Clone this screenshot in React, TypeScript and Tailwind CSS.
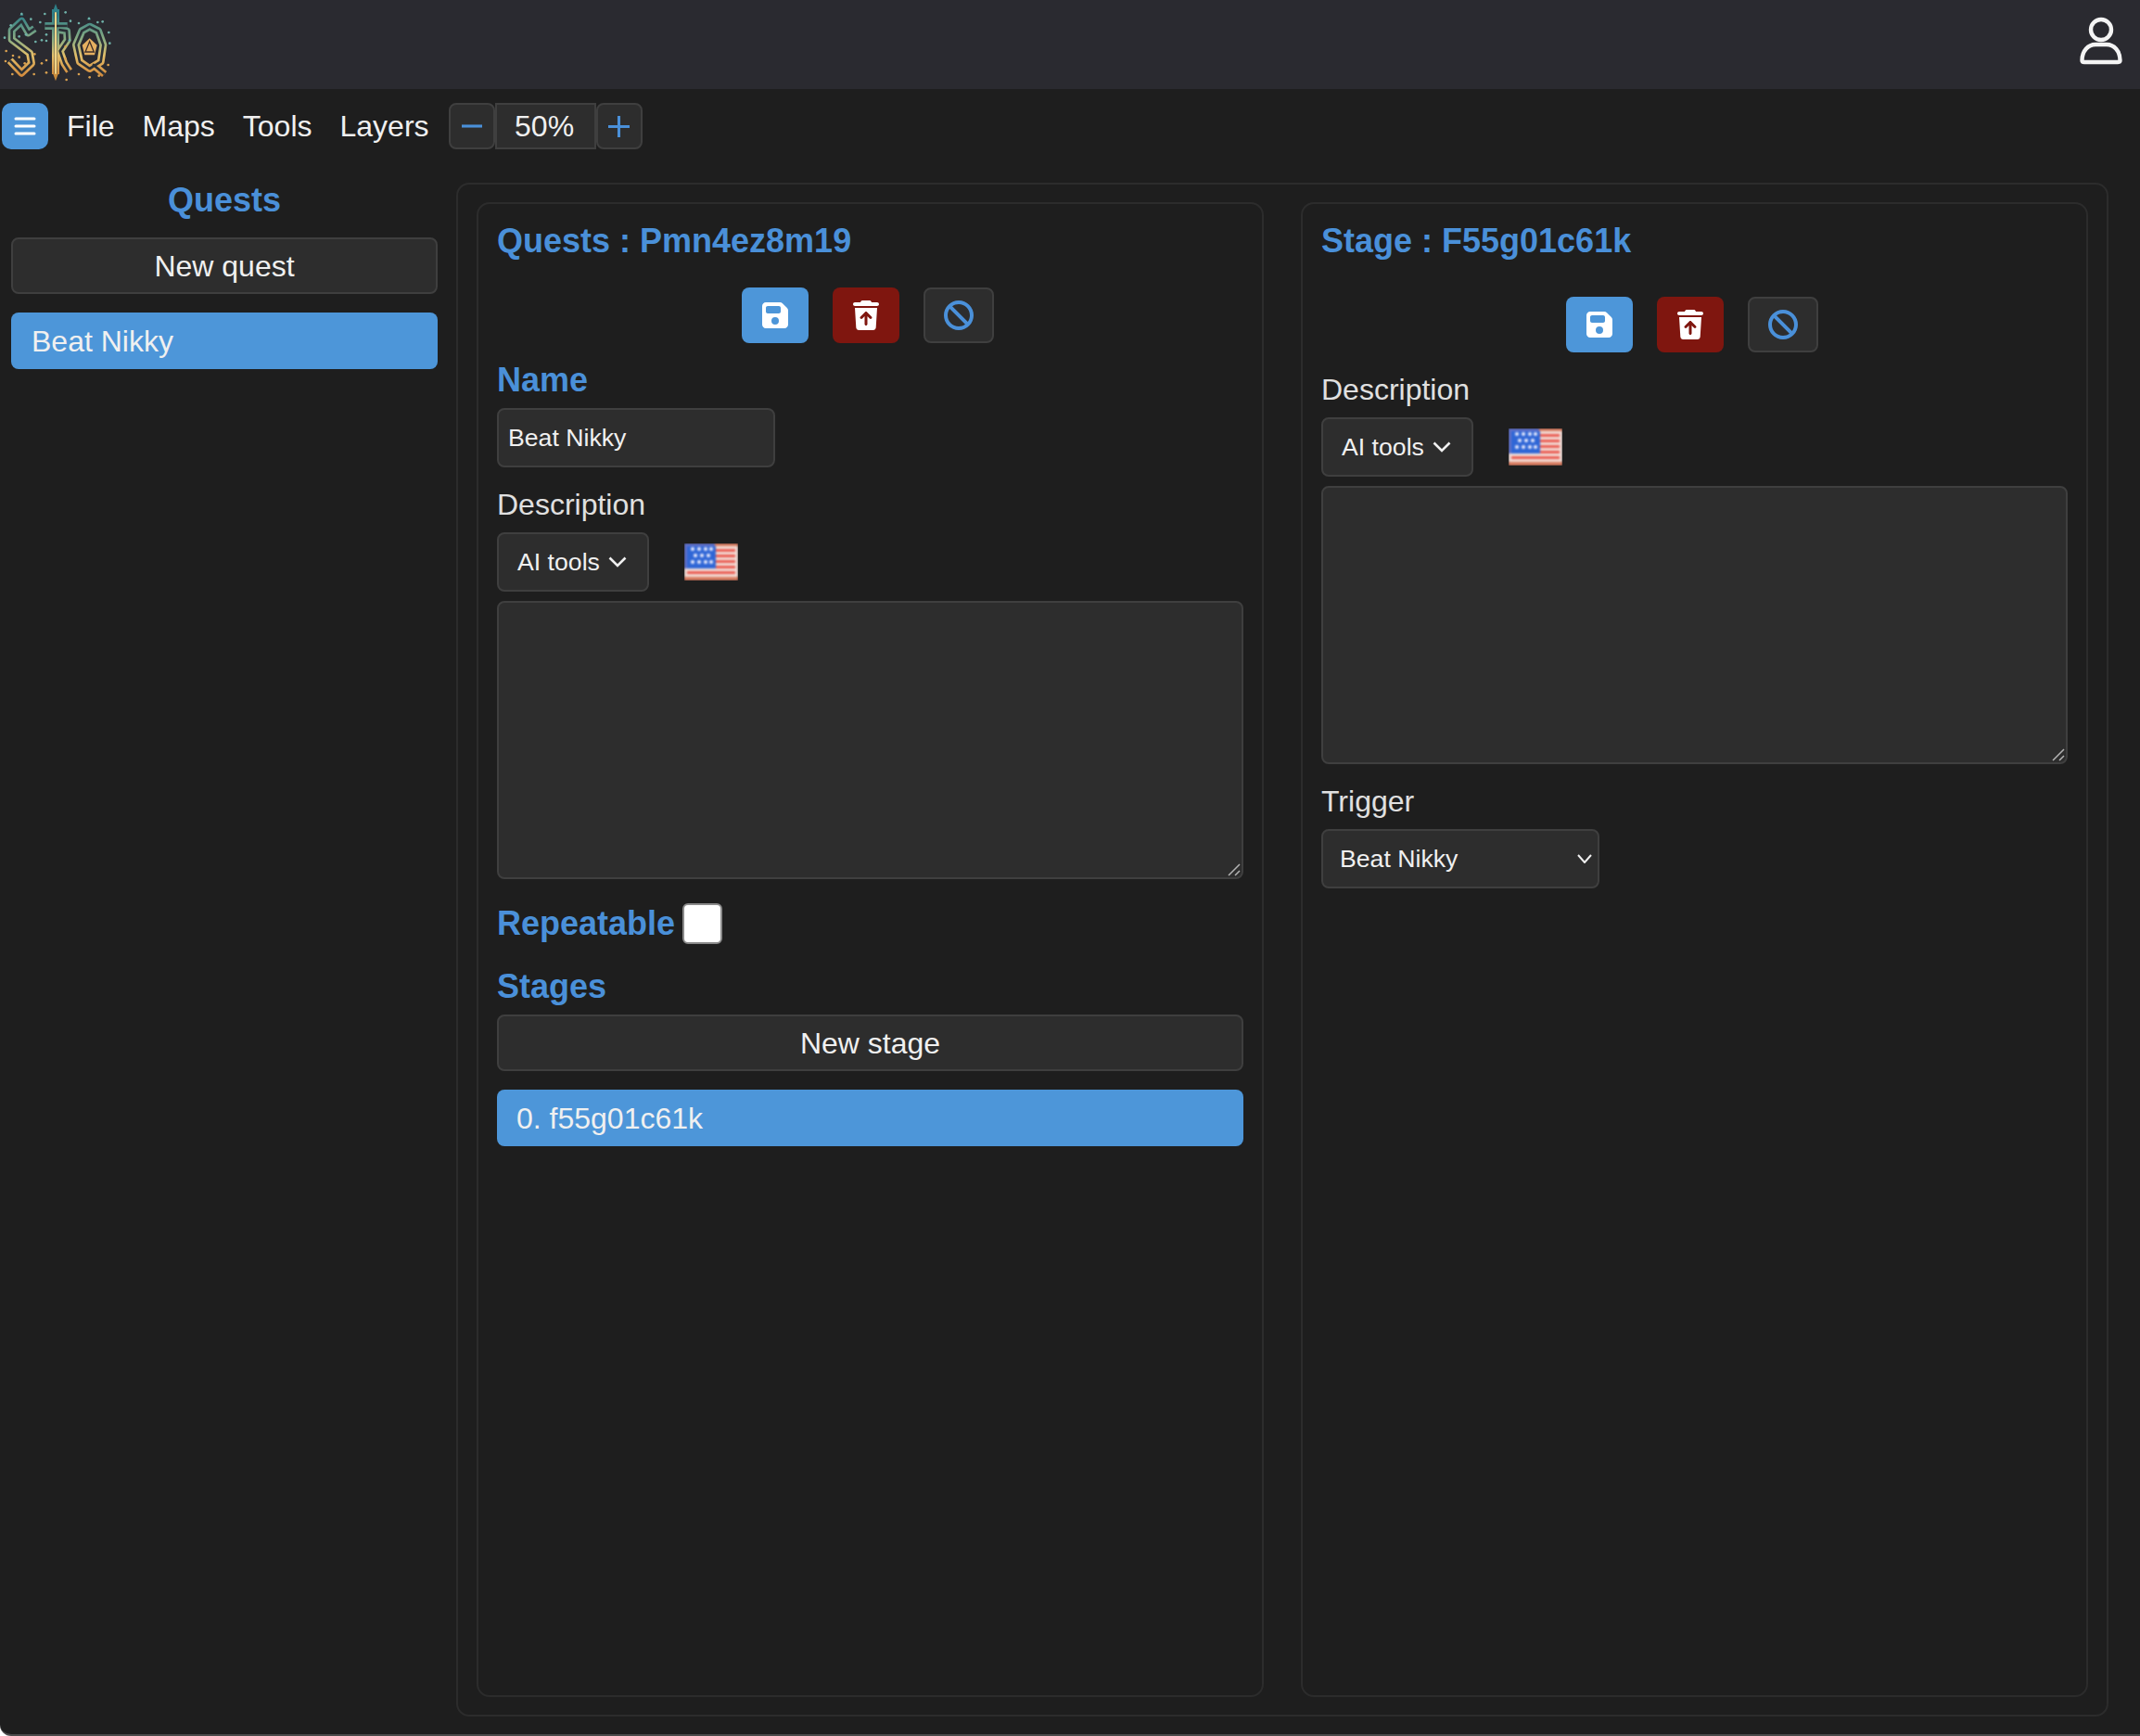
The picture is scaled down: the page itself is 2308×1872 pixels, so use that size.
import React from "react";
import { FaFloppyDisk, FaTrashArrowUp, FaBan } from "react-icons/fa6";

const ctl = "rounded-[8px] border-2 border-[#3f3f3f] bg-[#2d2d2d] text-[#f0f0f0]";
const heading = "h-[40px] text-[36px] leading-[40px] font-bold text-[#4a90d9]";
const label = "h-[36px] text-[32px] leading-[36px] text-[#e0e0e0]";

function Logo() {
  const dots: [number, number][] = [
    [70, 45], [100, 62], [145, 45], [212, 40], [228, 68], [130, 72], [35, 82], [15, 122], [62, 118], [84, 112],
    [115, 135], [135, 130], [150, 132], [150, 112], [20, 165], [42, 180], [62, 185], [80, 205], [18, 198], [112, 175],
    [135, 205], [150, 195], [212, 190], [225, 130], [212, 150], [40, 240], [110, 240], [150, 235], [215, 258], [255, 240],
    [290, 250], [320, 245], [350, 210], [355, 140], [352, 105], [332, 70], [316, 72], [288, 60], [255, 75],
  ];
  const letters = (
    <>
      <path d="M112 92 L92 106 L70 68 L38 98 L38 128 L96 172 L102 205 L70 236 L32 196" />
      <path d="M180 30 L180 240 M145 84 L218 84 M190 96 L216 100 L218 130 L194 165 L208 205 L224 230" />
      <path d="M265 100 L290 86 L318 100 L334 145 L326 200 L290 222 L258 200 L246 145 Z M300 208 L338 240" />
    </>
  );
  return (
    <svg viewBox="0 0 390 288" className="h-[96px] w-[130px] shrink-0 blur-[0.6px]">
      <defs>
        <linearGradient id="lg" gradientUnits="userSpaceOnUse" x1="0" y1="50" x2="0" y2="250">
          <stop offset="0" stopColor="#2f8088" />
          <stop offset="0.4" stopColor="#8fae82" />
          <stop offset="0.65" stopColor="#e3bf6a" />
          <stop offset="1" stopColor="#d0863a" />
        </linearGradient>
      </defs>
      <g fill="none" stroke="url(#lg)" strokeWidth="24" strokeLinejoin="round">{letters}</g>
      <g fill="none" stroke="#2a3036" strokeWidth="8" strokeLinejoin="round">{letters}</g>
      <path d="M180 30 L180 240" stroke="#f0d488" strokeWidth="6" />
      <path d="M180 12 L170 40 L190 40 Z M70 40 l6 10 l-12 0 Z M288 54 l6 10 l-12 0 Z" fill="#2f8088" />
      <path d="M180 240 L170 235 L180 262 L190 235 Z" fill="#c98a3a" />
      <path d="M290 124 L314 146 L306 178 L274 178 L266 146 Z" fill="#e6b060" />
      <path d="M290 134 L304 168 L276 168 Z" fill="none" stroke="#40302a" strokeWidth="4" />
      {dots.map(([x, y], i) => (
        <circle key={i} cx={x} cy={y} r="4" fill={y < 150 ? "#6fb0a8" : "#d8a050"} />
      ))}
    </svg>
  );
}

function Flag() {
  const stars: [number, number][] = [
    [9, 6], [16, 6], [23, 6], [29, 6], [12, 13], [19, 13], [26, 13], [9, 20], [16, 20], [23, 20], [29, 20],
  ];
  const stripes = [6, 12, 18, 24, 30];
  return (
    <div className="h-[40px] w-[58px] shrink-0 overflow-hidden">
      <svg viewBox="0 0 58 40" className="h-[40px] w-[58px] blur-[1.1px]">
        <rect width="58" height="40" fill="#f2ded8" />
        {stripes.map((y) => (
          <rect key={y} x="3" y={y} width="52" height="3" fill="#ea5a50" />
        ))}
        <rect x="3" y="3" width="31" height="24" fill="#2f66d6" />
        {stars.map(([x, y], i) => (
          <circle key={i} cx={x} cy={y} r="2" fill="#f4f4ff" />
        ))}
        <rect width="58" height="3" fill="#d97d62" />
        <rect width="33" height="3" fill="#6070c8" />
        <rect width="3" height="27" fill="#6070c8" />
        <rect y="36" width="58" height="4" fill="#d97d62" />
      </svg>
    </div>
  );
}

function Actions({ className }: { className: string }) {
  return (
    <div className={"flex justify-center gap-[26px] pr-[5px] " + className}>
      <button className="flex h-[60px] w-[72px] items-center justify-center rounded-[8px] bg-[#4d96d9] text-white">
        <FaFloppyDisk size={32} />
      </button>
      <button className="flex h-[60px] w-[72px] items-center justify-center rounded-[8px] bg-[#7f160f] text-white">
        <FaTrashArrowUp size={32} />
      </button>
      <button className={"flex h-[60px] w-[76px] items-center justify-center " + ctl}>
        <FaBan size={32} className="text-[#4a90d9]" />
      </button>
    </div>
  );
}

function AiRow({ className }: { className: string }) {
  return (
    <div className={"flex items-center gap-[38px] " + className}>
      <button className={"flex h-[64px] w-[164px] items-center gap-[9px] pl-[20px] text-[26.67px] " + ctl}>
        <span>AI tools</span>
        <svg viewBox="0 0 20 12" className="h-[12px] w-[20px]" fill="none" stroke="#f0f0f0" strokeWidth="2.6">
          <path d="M1.5 1.5 L10 10 L18.5 1.5" />
        </svg>
      </button>
      <Flag />
    </div>
  );
}

function Area({ className }: { className: string }) {
  return (
    <div className={"relative h-[300px] " + className}>
      <textarea className="block h-full w-full resize-none rounded-[8px] border-2 border-[#3f3f3f] bg-[#2d2d2d] p-[10px] text-[26.67px] text-[#f0f0f0] outline-none" />
      <svg viewBox="0 0 14 14" className="pointer-events-none absolute bottom-[3px] right-[3px] h-[14px] w-[14px]" stroke="#b4b4b4" strokeWidth="1.5">
        <path d="M1 13 L13 1 M8 13 L13 8" />
      </svg>
    </div>
  );
}

export default function App() {
  return (
    <div className="box-border flex h-[1872px] w-full flex-col rounded-bl-[12px] border-b-2 border-[#4a4a4a] bg-[#1e1e1e] font-['Liberation_Sans',Arial,sans-serif] text-[#f0f0f0]">
      <header className="flex h-[96px] shrink-0 items-center justify-between bg-[#2a2a30]">
        <Logo />
        <svg viewBox="0 0 48 56" className="mr-[18px] mt-[-6px] h-[56px] w-[48px]" fill="none" stroke="#f4f4f4" strokeWidth="4.4">
          <circle cx="24" cy="15" r="11" />
          <path d="M3.5 48 C3.5 38 10 31 18 31 L30 31 C38 31 44.5 38 44.5 48 C44.5 49.5 43.5 50 42 50 L6 50 C4.5 50 3.5 49.5 3.5 48 Z" strokeLinejoin="round" />
        </svg>
      </header>

      <nav className="ml-[2px] mt-[15px] flex h-[50px] shrink-0 items-center text-[32px]">
        <button className="flex h-[50px] w-[50px] items-center justify-center rounded-[10px] bg-[#4d96d9]">
          <svg viewBox="0 0 24 20" className="h-[20px] w-[24px]" stroke="#ffffff" strokeWidth="3" strokeLinecap="round">
            <path d="M2 2 H22 M2 10 H22 M2 18 H22" />
          </svg>
        </button>
        <span className="ml-[20px]">File</span>
        <span className="ml-[30px]">Maps</span>
        <span className="ml-[30px]">Tools</span>
        <span className="ml-[30px]">Layers</span>
        <button className={"ml-[21px] flex h-[50px] w-[50px] items-center justify-center " + ctl}>
          <svg viewBox="0 0 24 4" className="h-[4px] w-[22px]" stroke="#4a90d9" strokeWidth="3.4">
            <path d="M0 2 H24" />
          </svg>
        </button>
        <div className="flex h-[50px] w-[109px] items-center justify-center border-2 border-[#3f3f3f] bg-[#2d2d2d] pr-[2px]">50%</div>
        <button className={"flex h-[50px] w-[50px] items-center justify-center " + ctl}>
          <svg viewBox="0 0 24 24" className="h-[23px] w-[23px]" stroke="#4a90d9" strokeWidth="3.2">
            <path d="M0 12 H24 M12 0 V24" />
          </svg>
        </button>
      </nav>

      <div className="mt-[36px] flex min-h-0 flex-1 gap-[20px] pb-[19px] pl-[12px] pr-[34px]">
        <aside className="flex w-[460px] shrink-0 flex-col">
          <h2 className="h-[38px] text-center text-[36px] leading-[38px] font-bold text-[#4a90d9]">Quests</h2>
          <button className={"mt-[21px] h-[61px] w-full text-center text-[32px] " + ctl}>New quest</button>
          <div className="mt-[20px] flex h-[61px] items-center rounded-[8px] bg-[#4d96d9] pl-[22px] text-[32px] text-[#f0f0f0]">Beat Nikky</div>
        </aside>

        <main className="flex min-w-0 flex-1 gap-[40px] rounded-[14px] border-2 border-[#2c2c2c] px-[20px] py-[19px]">
          <section className="min-w-0 flex-1 rounded-[14px] border-2 border-[#2c2c2c] px-[20px] pt-[20px]">
            <h2 className={heading}>Quests : Pmn4ez8m19</h2>
            <Actions className="mt-[30px]" />
            <h3 className={"mt-[20px] " + heading}>Name</h3>
            <input
              readOnly
              defaultValue="Beat Nikky"
              className={"mt-[10px] block h-[64px] w-[300px] px-[10px] text-[26.67px] outline-none " + ctl}
            />
            <div className={"mt-[22px] " + label}>Description</div>
            <AiRow className="mt-[12px]" />
            <Area className="mt-[10px]" />
            <div className="mt-[26px] flex h-[44px] items-center gap-[8px]">
              <span className="text-[36px] font-bold text-[#4a90d9]">Repeatable</span>
              <input type="checkbox" className="h-[44px] w-[43px] appearance-none rounded-[6px] border-2 border-[#8a8a8a] bg-white" />
            </div>
            <h3 className={"mt-[26px] " + heading}>Stages</h3>
            <button className={"mt-[10px] h-[61px] w-full text-center text-[32px] " + ctl}>New stage</button>
            <div className="mt-[20px] flex h-[61px] items-center rounded-[8px] bg-[#4d96d9] pl-[21px] text-[32px] text-[#f0f0f0]">0. f55g01c61k</div>
          </section>

          <section className="min-w-0 flex-1 rounded-[14px] border-2 border-[#2c2c2c] px-[20px] pt-[20px]">
            <h2 className={heading}>Stage : F55g01c61k</h2>
            <Actions className="mt-[40px]" />
            <div className={"mt-[22px] " + label}>Description</div>
            <AiRow className="mt-[12px]" />
            <Area className="mt-[10px]" />
            <div className={"mt-[22px] " + label}>Trigger</div>
            <div className="relative mt-[12px] h-[64px] w-[300px]">
              <select className={"h-full w-full appearance-none pl-[18px] text-[26.67px] outline-none " + ctl}>
                <option>Beat Nikky</option>
              </select>
              <svg viewBox="0 0 16 10" className="pointer-events-none absolute right-[8px] top-[27px] h-[10px] w-[16px]" fill="none" stroke="#f0f0f0" strokeWidth="2">
                <path d="M1 1 L8 9 L15 1" />
              </svg>
            </div>
          </section>
        </main>
      </div>
    </div>
  );
}
